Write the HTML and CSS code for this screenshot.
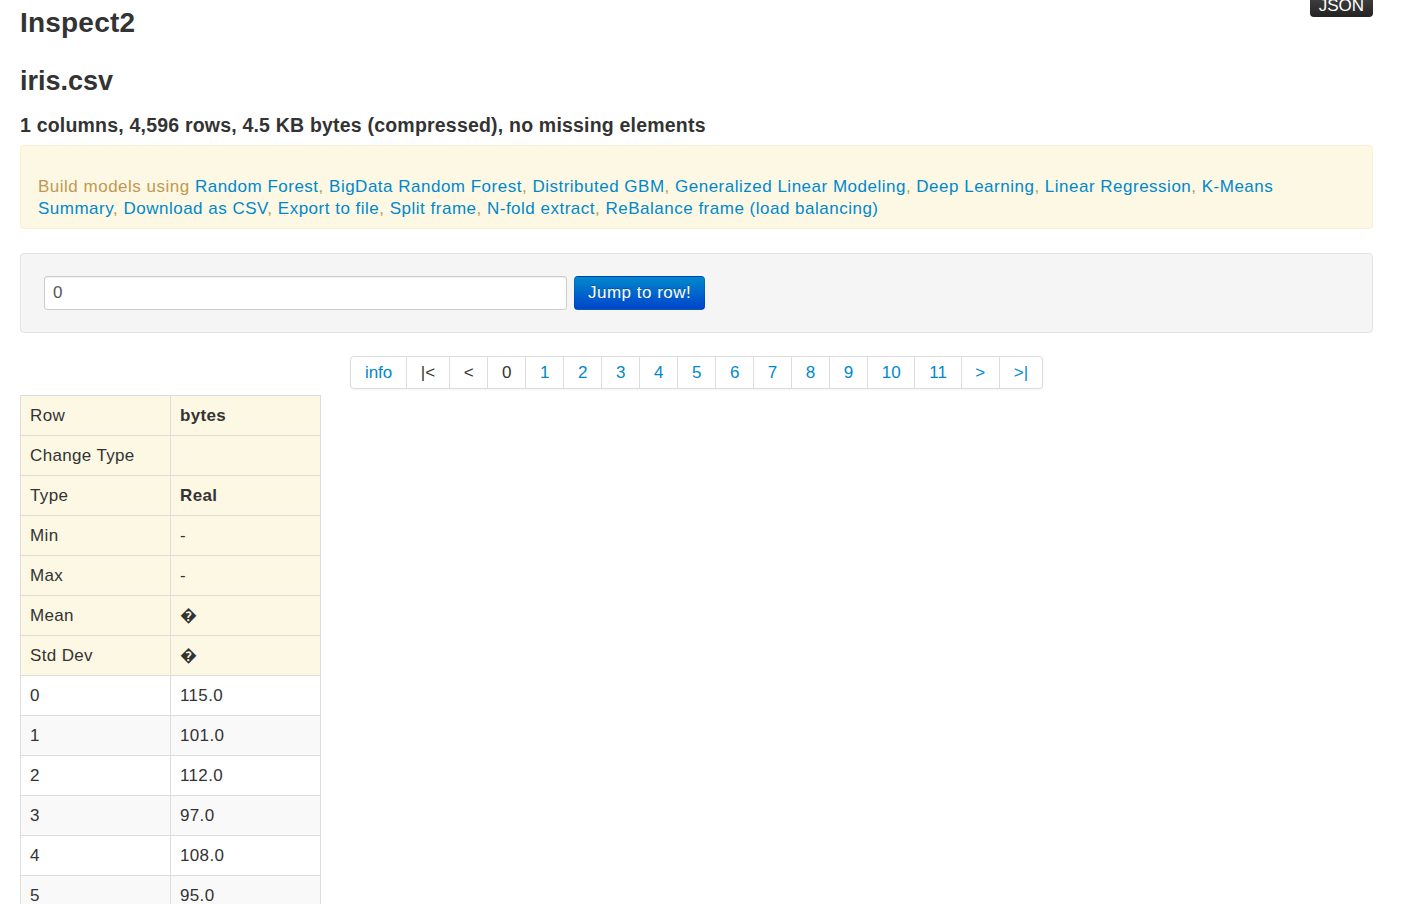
FILE: index.html
```html
<!DOCTYPE html>
<html>
<head>
<meta charset="utf-8">
<title>Inspect2</title>
<link rel="stylesheet" href="styles.css">
</head>
<body>
<div class="container">
  <div class="header">
    <h3 class="title">Inspect2</h3>
    <a class="json-btn" href="#">JSON</a>
  </div>
  <h3 class="file">iris.csv</h3>
  <h4 class="summary">1 columns, 4,596 rows, 4.5 KB bytes (compressed), no missing elements</h4>
  <div class="alert">
    <div class="alert-spacer"></div>
    <div>Build models using <a href="#">Random Forest</a>, <a href="#">BigData Random Forest</a>, <a href="#">Distributed GBM</a>, <a href="#">Generalized Linear Modeling</a>, <a href="#">Deep Learning</a>, <a href="#">Linear Regression</a>, <a href="#">K-Means</a></div>
    <div><a href="#">Summary</a>, <a href="#">Download as CSV</a>, <a href="#">Export to file</a>, <a href="#">Split frame</a>, <a href="#">N-fold extract</a>, <a href="#">ReBalance frame (load balancing)</a></div>
  </div>
  <form class="well">
    <input class="row-input" type="text" value="0">
    <button class="btn-primary" type="button">Jump to row!</button>
  </form>
  <div class="pagination-wrap">
    <ul class="pagination">
      <li><a href="#">info</a></li>
      <li><span>|&lt;</span></li>
      <li><span>&lt;</span></li>
      <li><span>0</span></li>
      <li><a href="#">1</a></li>
      <li><a href="#">2</a></li>
      <li><a href="#">3</a></li>
      <li><a href="#">4</a></li>
      <li><a href="#">5</a></li>
      <li><a href="#">6</a></li>
      <li><a href="#">7</a></li>
      <li><a href="#">8</a></li>
      <li><a href="#">9</a></li>
      <li><a href="#">10</a></li>
      <li><a href="#">11</a></li>
      <li><a href="#">&gt;</a></li>
      <li><a href="#">&gt;|</a></li>
    </ul>
  </div>
  <table class="data">
    <tbody>
      <tr class="meta"><td>Row</td><td class="b">bytes</td></tr>
      <tr class="meta"><td>Change Type</td><td></td></tr>
      <tr class="meta"><td>Type</td><td class="b">Real</td></tr>
      <tr class="meta"><td>Min</td><td>-</td></tr>
      <tr class="meta"><td>Max</td><td>-</td></tr>
      <tr class="meta"><td>Mean</td><td>&#xFFFD;</td></tr>
      <tr class="meta"><td>Std Dev</td><td>&#xFFFD;</td></tr>
      <tr class="even"><td>0</td><td>115.0</td></tr>
      <tr class="odd"><td>1</td><td>101.0</td></tr>
      <tr class="even"><td>2</td><td>112.0</td></tr>
      <tr class="odd"><td>3</td><td>97.0</td></tr>
      <tr class="even"><td>4</td><td>108.0</td></tr>
      <tr class="odd"><td>5</td><td>95.0</td></tr>
      <tr class="even"><td>6</td><td>108.0</td></tr>
      <tr class="odd"><td>7</td><td>101.0</td></tr>
    </tbody>
  </table>
</div>
</body>
</html>
```
FILE: styles.css
```css
html, body {
  margin: 0;
  padding: 0;
  background: #ffffff;
}
body {
  font-family: "Liberation Sans", Arial, sans-serif;
  font-size: 17px;
  line-height: 22px;
  color: #333333;
  overflow: hidden;
}
a {
  color: #0088cc;
  text-decoration: none;
}
.container {
  width: 1353px;
  margin: 0 0 0 20px;
}
.header {
  display: flex;
  justify-content: space-between;
  align-items: flex-start;
}
h3 {
  font-size: 28px;
  line-height: 40px;
  font-weight: bold;
  margin: 0;
  color: #333333;
}
.title {
  margin-top: 3px;
  letter-spacing: 0.2px;
}
.json-btn {
  display: block;
  margin-top: -5px;
  padding: 0 9px;
  line-height: 22px;
  height: 22px;
  color: #ffffff;
  font-size: 17px;
  background: linear-gradient(#444444, #222222);
  border-radius: 0 0 4px 4px;
}
.file {
  margin-top: 18px;
  font-size: 27px;
}
.summary {
  margin: 13px 0 0;
  font-size: 19.5px;
  line-height: 22px;
  font-weight: bold;
  letter-spacing: 0.2px;
}
.alert {
  margin-top: 9px;
  padding: 8px 35px 8px 17px;
  background: #fcf8e3;
  border: 1px solid #fbeed5;
  border-radius: 4px;
  color: #c09853;
  letter-spacing: 0.5px;
}
.alert-spacer {
  height: 22px;
}
.well {
  margin: 24px 0 0;
  padding: 22px 23px;
  background: #f5f5f5;
  border: 1px solid #e3e3e3;
  border-radius: 4px;
  display: flex;
  gap: 7px;
  align-items: center;
}
.row-input {
  box-sizing: border-box;
  width: 523px;
  height: 34px;
  margin: 0;
  padding: 4px 8px;
  font-family: "Liberation Sans", Arial, sans-serif;
  font-size: 17px;
  color: #555555;
  background: #ffffff;
  border: 1px solid #cccccc;
  border-radius: 3px;
  box-shadow: inset 0 1px 1px rgba(0,0,0,0.075);
}
.btn-primary {
  box-sizing: border-box;
  height: 34px;
  margin: 0;
  padding: 0 13px;
  font-family: "Liberation Sans", Arial, sans-serif;
  font-size: 17px;
  letter-spacing: 0.5px;
  color: #ffffff;
  background: linear-gradient(#0088cc, #0044cc);
  border: 1px solid #0044aa;
  border-color: rgba(0,0,0,0.1) rgba(0,0,0,0.1) rgba(0,0,0,0.25);
  border-radius: 4px;
  text-shadow: 0 -1px 0 rgba(0,0,0,0.25);
}
.pagination-wrap {
  margin-top: 23px;
  display: flex;
  justify-content: center;
}
.pagination {
  display: flex;
  list-style: none;
  margin: 0;
  padding: 0;
  border-radius: 4px;
  box-shadow: 0 1px 2px rgba(0,0,0,0.05);
}
.pagination li a,
.pagination li span {
  display: block;
  padding: 5px 13.75px 4px;
  line-height: 22px;
  border: 1px solid #dddddd;
  border-left-width: 0;
  background: #ffffff;
}
.pagination li span {
  color: #333333;
}
.pagination li:first-child a {
  border-left-width: 1px;
  border-radius: 4px 0 0 4px;
}
.pagination li:last-child a {
  border-radius: 0 4px 4px 0;
}
.data {
  margin-top: 6px;
  width: 301px;
  border-collapse: collapse;
  border: 1px solid #dddddd;
  letter-spacing: 0.35px;
}
.data td {
  width: 50%;
  padding: 9px 8px 8px 9px;
  line-height: 22px;
  border: 1px solid #dddddd;
  text-align: left;
  vertical-align: top;
}
.data td.b {
  font-weight: bold;
}
.data tr.meta td {
  background: #fcf8e3;
}
.data tr.even td {
  background: #ffffff;
}
.data tr.odd td {
  background: #f9f9f9;
}
```
